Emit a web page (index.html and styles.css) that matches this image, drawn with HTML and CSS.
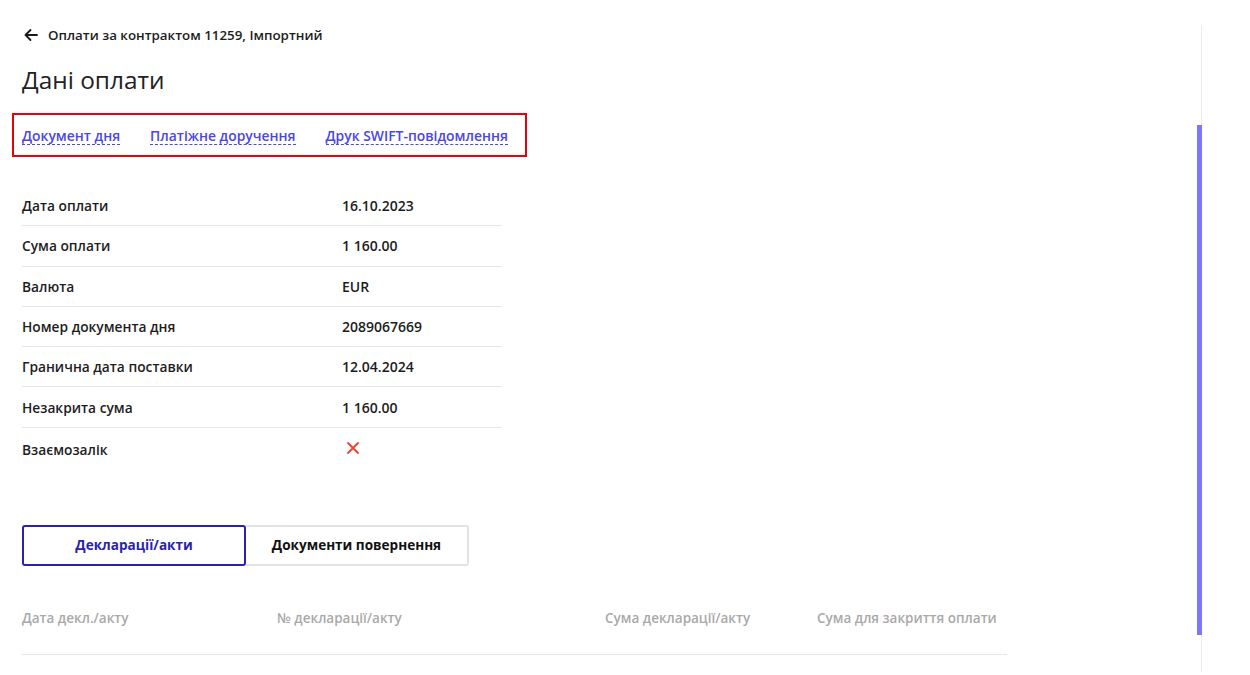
FILE: index.html
```html
<!DOCTYPE html>
<html lang="uk">
<head>
<meta charset="utf-8">
<title>Дані оплати</title>
<link rel="stylesheet" href="styles.css">
</head>
<body>
<div class="page">
  <main class="content">
    <a class="back" href="#">
      <svg class="back-icon" width="16" height="16" viewBox="0 0 16 16" fill="none" stroke="#1a1a1a" stroke-width="1.8" stroke-linecap="round" stroke-linejoin="round"><path d="M14 8H2.5M7.5 3L2.5 8l5 5"/></svg>
      <span>Оплати за контрактом 11259, Імпортний</span>
    </a>
    <h1 class="title">Дані оплати</h1>
    <div class="links">
      <a class="link" href="#">Документ дня</a>
      <a class="link" href="#">Платіжне доручення</a>
      <a class="link" href="#">Друк SWIFT-повідомлення</a>
    </div>
    <div class="details">
      <div class="row"><div class="label">Дата оплати</div><div class="value">16.10.2023</div></div>
      <div class="row"><div class="label">Сума оплати</div><div class="value">1 160.00</div></div>
      <div class="row"><div class="label">Валюта</div><div class="value">EUR</div></div>
      <div class="row"><div class="label">Номер документа дня</div><div class="value">2089067669</div></div>
      <div class="row"><div class="label">Гранична дата поставки</div><div class="value">12.04.2024</div></div>
      <div class="row"><div class="label">Незакрита сума</div><div class="value">1 160.00</div></div>
      <div class="row last"><div class="label">Взаємозалік</div><div class="value"><svg width="14" height="14" viewBox="0 0 14 14" stroke="#f0422a" stroke-width="1.8" stroke-linecap="round"><path d="M2 2l10 10M12 2L2 12"/></svg></div></div>
    </div>
    <div class="tabs">
      <button class="tab active">Декларації/акти</button>
      <button class="tab">Документи повернення</button>
    </div>
    <div class="thead">
      <div class="th c1">Дата декл./акту</div>
      <div class="th c2">№ декларації/акту</div>
      <div class="th c3">Сума декларації/акту</div>
      <div class="th c4">Сума для закриття оплати</div>
    </div>
  </main>
  <div class="scrollbar"><div class="thumb"></div></div>
</div>
</body>
</html>
```

FILE: styles.css
```css
* { box-sizing: border-box; }
html, body { margin: 0; padding: 0; background: #fff; }
body {
  font-family: "Open Sans", "Noto Sans", sans-serif;
  color: #1d1d1d;
  width: 1250px;
  height: 675px;
  overflow: hidden;
}
.page {
  display: flex;
  height: 675px;
}
.content {
  width: 1196px;
  padding: 25px 0 0 22px;
}
.back {
  display: flex;
  align-items: center;
  gap: 9px;
  text-decoration: none;
  color: #1d1d1d;
  font-size: 13.35px;
  font-weight: 600;
  height: 20px;
}
.back-icon { margin-left: 1px; }
.title {
  margin: 19px 0 0;
  font-size: 24.4px;
  font-weight: 400;
  color: #222;
  line-height: 32px;
}
.links {
  display: flex;
  gap: 30px;
  margin: 17px 0 0 -10px;
  width: 515px;
  height: 44px;
  border: 2px solid #e8000a;
  align-items: center;
  padding: 2px 0 0 8px;
}
.link {
  color: #4b46e6;
  font-size: 13.9px;
  font-weight: 600;
  text-decoration: none;
  border-bottom: 1px dashed #4b46e6;
  line-height: 17px;
}
.details {
  width: 480px;
  margin-top: 29px;
}
.row {
  display: flex;
  align-items: center;
  height: 40.3px;
  border-bottom: 1px solid #e6e6e6;
  font-size: 13.75px;
  font-weight: 600;
}
.row.last { border-bottom: none; height: 44px; }
.label { width: 320px; color: #1d1d1d; }
.value { color: #1d1d1d; display: flex; align-items: center; font-size: 14px; }
.row.last .value { margin-top: -3px; margin-left: 4px; }
.tabs {
  display: flex;
  margin-top: 53px;
}
.tab {
  font-family: inherit;
  font-size: 13.55px;
  font-weight: 700;
  height: 41px;
  width: 223px;
  background: #fff;
  color: #111;
  border: 2px solid #e1e3e8;
  border-left: none;
  border-radius: 0 3px 3px 0;
  padding: 0;
}
.tab.active {
  width: 224px;
  color: #2a1fb0;
  border: 2px solid #2a20b3;
  border-radius: 3px;
}
.thead {
  display: flex;
  width: 985px;
  height: 89px;
  border-bottom: 1px solid #e6e6e6;
  align-items: flex-start;
  padding-top: 43px;
  font-size: 13.5px;
  font-weight: 600;
  color: #a9a9a9;
}
.th { white-space: nowrap; }
.c1 { width: 255px; }
.c2 { width: 328px; }
.c3 { width: 212px; }
.c4 { width: 190px; }
.scrollbar {
  position: relative;
  width: 6px;
  margin-top: 25px;
  height: 647px;
  border-right: 1px solid #ececec;
}
.thumb {
  position: absolute;
  left: 1px;
  top: 100px;
  width: 5px;
  height: 510px;
  background: #7b78ff;
}
```
